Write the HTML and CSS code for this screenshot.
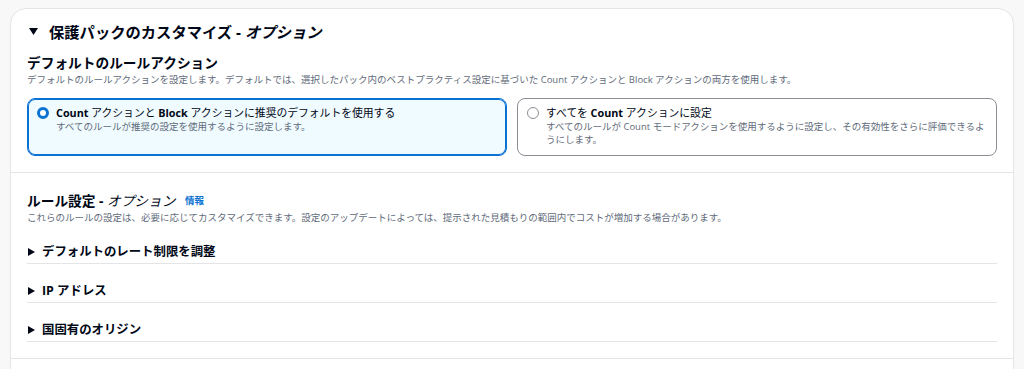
FILE: index.html
```html
<!DOCTYPE html>
<html lang="ja">
<head>
<meta charset="utf-8">
<title>保護パックのカスタマイズ</title>
<link rel="stylesheet" href="styles.css">
</head>
<body>
<div class="card">
  <div class="card-header">
    <svg class="caret-down" width="9" height="7" viewBox="0 0 9 7"><polygon points="0,0 9,0 4.5,7" fill="#000716"/></svg>
    <h2 class="title">保護パックのカスタマイズ - <i class="opt-bold">オプション</i></h2>
  </div>

  <div class="section">
    <h3 class="subhead">デフォルトのルールアクション</h3>
    <p class="desc">デフォルトのルールアクションを設定します。デフォルトでは、選択したパック内のベストプラクティス設定に基づいた Count アクションと Block アクションの両方を使用します。</p>
    <div class="tiles">
      <div class="tile selected">
        <span class="radio checked"></span>
        <div class="tile-text">
          <div class="tile-label"><b>Count</b> アクションと <b>Block</b> アクションに推奨のデフォルトを使用する</div>
          <div class="tile-desc">すべてのルールが推奨の設定を使用するように設定します。</div>
        </div>
      </div>
      <div class="tile">
        <span class="radio"></span>
        <div class="tile-text">
          <div class="tile-label">すべてを <b>Count</b> アクションに設定</div>
          <div class="tile-desc">すべてのルールが Count モードアクションを使用するように設定し、その有効性をさらに評価できるようにします。</div>
        </div>
      </div>
    </div>
  </div>

  <div class="section rules">
    <h3 class="subhead">ルール設定 - <i class="opt">オプション</i> <a class="info" href="#">情報</a></h3>
    <p class="desc">これらのルールの設定は、必要に応じてカスタマイズできます。設定のアップデートによっては、提示された見積もりの範囲内でコストが増加する場合があります。</p>
    <div class="expander">
      <svg class="caret-right" width="7" height="8" viewBox="0 0 7 8"><polygon points="0,0 7,4 0,8" fill="#000716"/></svg>
      <span class="exp-label">デフォルトのレート制限を調整</span>
    </div>
    <div class="expander">
      <svg class="caret-right" width="7" height="8" viewBox="0 0 7 8"><polygon points="0,0 7,4 0,8" fill="#000716"/></svg>
      <span class="exp-label">IP アドレス</span>
    </div>
    <div class="expander">
      <svg class="caret-right" width="7" height="8" viewBox="0 0 7 8"><polygon points="0,0 7,4 0,8" fill="#000716"/></svg>
      <span class="exp-label">国固有のオリジン</span>
    </div>
  </div>

  <div class="section empty"></div>
</div>
</body>
</html>
```

FILE: styles.css
```css
* { box-sizing: border-box; }
html, body { margin: 0; padding: 0; }
body {
  background: #f8f8f8;
  padding: 8px 10px 0 10px;
  font-family: "Open Sans", "Noto Sans CJK JP", sans-serif;
  color: #000716;
  overflow: hidden;
}
.card {
  background: #ffffff;
  border: 1px solid #e4e5e7;
  border-radius: 16px;
  width: 1004px;
}
.card-header {
  display: flex;
  align-items: center;
  padding: 12px 16px 0 18px;
  height: 33px;
}
.caret-down { flex: none; margin-right: 11px; }
.title {
  margin: 0;
  font-size: 15.3px;
  line-height: 20px;
  font-weight: 700;
}
.opt { font-weight: 400; font-style: italic; }
.opt-bold { font-weight: 700; font-style: italic; }
.section {
  padding: 12px 16px 16px 16px;
  border-bottom: 1px solid #e4e5e7;
}
.subhead {
  margin: 0;
  font-size: 13.7px;
  line-height: 18px;
  height: 18px;
  font-weight: 700;
}
.desc {
  margin: 1px 0 0 0;
  font-size: 9.5px;
  line-height: 14px;
  color: #5f6b7a;
}
.tiles {
  display: grid;
  grid-template-columns: 1fr 1fr;
  gap: 10px;
  margin-top: 11px;
}
.tile {
  display: flex;
  align-items: flex-start;
  gap: 7px;
  border: 1px solid #8c8c94;
  border-radius: 8px;
  padding: 7px 10px 8px 9px;
  min-height: 58px;
}
.tile.selected {
  border-color: #0972d3;
  box-shadow: inset 0 0 0 1px #0972d3;
  background: #f0fbff;
}
.radio {
  flex: none;
  width: 12px;
  height: 12px;
  border-radius: 50%;
  border: 1px solid #8c8c94;
  background: #fff;
  margin-top: 1px;
}
.radio.checked {
  border: 3.5px solid #0972d3;
}
.tile-label {
  font-size: 10.8px;
  line-height: 14px;
}
.tile-label b { font-weight: 700; }
.tile-desc {
  font-size: 9.5px;
  line-height: 13px;
  color: #5f6b7a;
}
.rules { padding-top: 19px; }
.info {
  font-size: 9.5px;
  line-height: 14px;
  vertical-align: top;
  position: relative;
  top: 2px;
  font-style: normal;
  font-weight: 700;
  color: #0972d3;
  text-decoration: none;
  margin-left: 6px;
}
.expander {
  display: flex;
  align-items: center;
  gap: 7px;
  padding: 19px 0 3px 1px;
  border-bottom: 1px solid #e4e5e7;
}
.caret-right { flex: none; }
.exp-label {
  font-size: 12.4px;
  line-height: 16px;
  font-weight: 700;
}
.section.empty { border-bottom: none; height: 40px; }
```
